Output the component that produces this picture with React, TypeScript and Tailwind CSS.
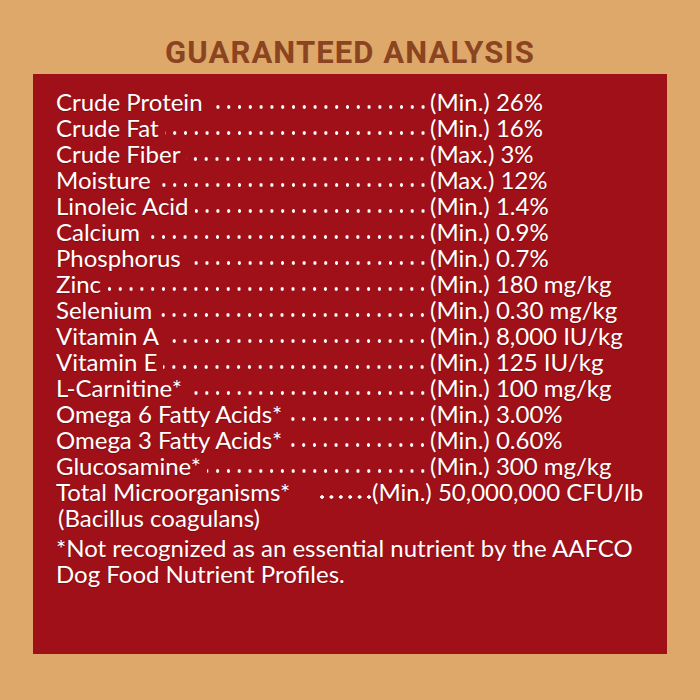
import React from "react";

const rows: [string, string][] = [
  ["Crude Protein", "(Min.) 26%"],
  ["Crude Fat", "(Min.) 16%"],
  ["Crude Fiber", "(Max.) 3%"],
  ["Moisture", "(Max.) 12%"],
  ["Linoleic Acid", "(Min.) 1.4%"],
  ["Calcium", "(Min.) 0.9%"],
  ["Phosphorus", "(Min.) 0.7%"],
  ["Zinc", "(Min.) 180 mg/kg"],
  ["Selenium", "(Min.) 0.30 mg/kg"],
  ["Vitamin A", "(Min.) 8,000 IU/kg"],
  ["Vitamin E", "(Min.) 125 IU/kg"],
  ["L-Carnitine*", "(Min.) 100 mg/kg"],
  ["Omega 6 Fatty Acids*", "(Min.) 3.00%"],
  ["Omega 3 Fatty Acids*", "(Min.) 0.60%"],
  ["Glucosamine*", "(Min.) 300 mg/kg"],
];

export default function App() {
  return (
    <div
      className="w-[700px] h-[700px] bg-[#dea86b] flex flex-col"
      style={{ fontFamily: "Lato, 'Open Sans', sans-serif" }}
    >
      <div className="h-[74px] flex items-center justify-center pt-[31px]">
        <h1
          className="text-[31px] font-bold leading-none text-[#8a4420] tracking-[1.1px]"
          style={{ fontFamily: "Roboto, 'Liberation Sans', sans-serif" }}
        >
          GUARANTEED ANALYSIS
        </h1>
      </div>
      <div className="mx-[33px] h-[580px] bg-[#a01018] pl-[23px] pt-[15px] text-white text-[24px] leading-[26px] [text-shadow:0_1px_1px_rgba(60,0,0,0.35)]">
        {rows.map(([name, val]) => (
          <div key={name} className="flex h-[26px] items-stretch">
            <div className="w-[374px] flex items-stretch">
              <span className="whitespace-nowrap">{name}</span>
              <span className="ml-[6px] h-full flex-1 bg-[radial-gradient(circle,#ffffff_1.5px,transparent_2px)] bg-size-[10.8px_26px] bg-position-[right_2px_bottom_-5px] bg-repeat-x" />
            </div>
            <span className="whitespace-nowrap">{val}</span>
          </div>
        ))}
        <div className="flex h-[26px] items-stretch">
          <div className="w-[316px] flex items-stretch">
            <span className="whitespace-nowrap">Total Microorganisms*</span>
            <span className="ml-[26px] h-full flex-1 bg-[radial-gradient(circle,#ffffff_1.5px,transparent_2px)] bg-size-[9.4px_26px] bg-position-[right_-2px_bottom_-5px] bg-repeat-x" />
          </div>
          <span className="whitespace-nowrap">(Min.) 50,000,000 CFU/lb</span>
        </div>
        <div className="h-[26px] pl-[2px] whitespace-nowrap">(Bacillus coagulans)</div>
        <div className="mt-[4px] leading-[26px]">
          *Not recognized as an essential nutrient by the AAFCO
          <br />
          Dog Food Nutrient Profiles.
        </div>
      </div>
    </div>
  );
}
